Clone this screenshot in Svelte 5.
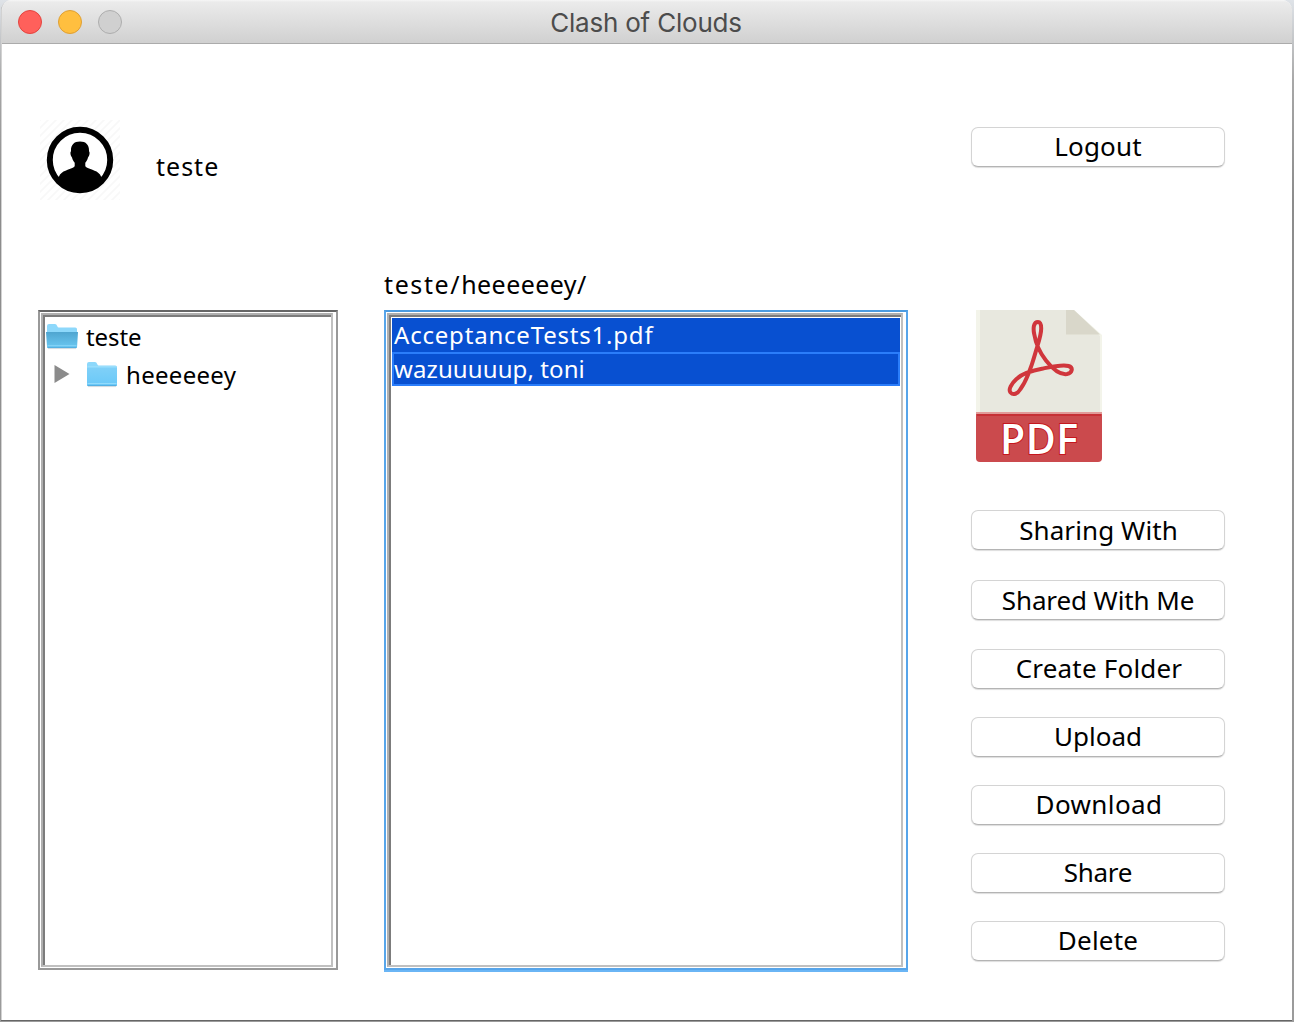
<script>
  const actions = [
    { label: 'Sharing With', kind: 'sharing' },
    { label: 'Shared With Me', kind: 'shared' },
    { label: 'Create Folder', kind: 'create' },
    { label: 'Upload', kind: 'upload' },
    { label: 'Download', kind: 'download' },
    { label: 'Share', kind: 'share' },
    { label: 'Delete', kind: 'delete' }
  ];
</script>

{#snippet folder(open)}
  <svg class="folder" width="32" height="28" viewBox="0 0 32 28">
    <defs>
      <linearGradient id="front" x1="0" y1="0" x2="0" y2="1">
        <stop offset="0" stop-color="#7fd0f8" />
        <stop offset="1" stop-color="#69c8f8" />
      </linearGradient>
      <linearGradient id="flap" x1="0" y1="0" x2="0" y2="1">
        <stop offset="0" stop-color="#4fa5d0" />
        <stop offset="1" stop-color="#6bc8f2" />
      </linearGradient>
    </defs>
    <path d="M2 25.6h28" stroke="#dedede" stroke-width="1" />
    <path d="M1 3q0-2 2-2h6q1.500 0 2.200 2t2 1.400h16q1.800 0 1.800 1.600v17.500q0 1.500-1.500 1.500h-27q-1.500 0-1.500-1.500z" fill="#8dd8fb" />
    {#if open}
      <path d="M0 9h32l-.9 14.500q0 1.500-1.500 1.500h-27q-1.500 0-1.600-1.500z" fill="url(#flap)" />
      <path d="M1.500 22.500h29" stroke="#86d4f7" stroke-width=".8" />
    {:else}
      <path d="M1 7h30v16.500q0 1.500-1.500 1.500h-27q-1.500 0-1.500-1.500z" fill="url(#front)" />
      <path d="M1.500 5.500h29M1.500 22.500h29" stroke="#9ce0fd" stroke-width=".8" />
    {/if}
    <path d="M1.500 24.600h29" stroke="#4ea9dc" stroke-width=".9" />
  </svg>
{/snippet}

<div class="desktop">
  <div class="window">
    <header class="titlebar">
      <div class="lights"><i class="close"></i><i class="minimize"></i><i class="zoom"></i></div>
      <h1>Clash of Clouds</h1>
    </header>

    <main>
      <section class="tree-column">
        <div class="user">
          <svg width="80" height="80" viewBox="0 0 80 80">
            <defs>
              <pattern id="hatch" width="8" height="8" patternUnits="userSpaceOnUse">
                <path d="M-2 2l4-4M0 8l8-8M6 10l4-4" stroke="#f8f8f8" stroke-width="1.800" />
              </pattern>
              <clipPath id="disc"><circle cx="40" cy="40" r="32" /></clipPath>
            </defs>
            <rect width="80" height="80" fill="url(#hatch)" />
            <circle cx="40" cy="40" r="30.200" fill="#fff" stroke="#000" stroke-width="6" />
            <path clip-path="url(#disc)" d="M40 21.500c6.300 0 9.300 3.700 9 9.700 1.200 1 .4 5-1 6.300-.6 2.600-1.600 3.900-2.700 5.200v3.500c3.200 3.600 11 3.200 14.700 8.300l2 4V76H18V58.500l2-4c4-5.100 11.500-4.700 14.700-8.300v-3.500c-1.100-1.300-2.100-2.600-2.700-5.200-1.400-1.300-2.200-5.300-1-6.300-.3-6 2.700-9.700 9-9.700z" />
          </svg>
          <span class="text username">teste</span>
        </div>
        <div class="panel tree">
          <div class="bevel">
            <div class="node root">{@render folder(true)}<span class="text t-root">teste</span></div>
            <div class="node child">
              <svg width="16" height="20" viewBox="0 0 16 20"><path d="M.5 1l15 9-15 9z" fill="#8b8b8b" /></svg>
              {@render folder(false)}<span class="text t-child">heeeeeey</span>
            </div>
          </div>
        </div>
      </section>

      <section class="file-column">
        <div class="path"><span class="text t-path"><span class="parent">teste/</span>heeeeeey/</span></div>
        <div class="panel files">
          <div class="bevel">
            <div class="row"><span class="text t-file">AcceptanceTests1.pdf</span></div>
            <div class="row focused"><span class="text t-note">wazuuuuup, toni</span></div>
          </div>
        </div>
      </section>

      <aside>
        <button class="logout"><span class="b-logout">Logout</span></button>
        <svg class="pdf" width="126" height="152" viewBox="0 0 126 152">
          <path d="M0 0h98l28 25v79H0z" fill="#f3f4ea" />
          <path d="M4 0h92l28 26v77H4z" fill="#e8e8df" />
          <path d="M90 0h8l26 24.500H90z" fill="#d9d7ca" />
          <path d="M0 102h126v46q0 4-4 4H4q-4 0-4-4z" fill="#cb4a4d" />
          <path d="M0 103h126" stroke="#e19a98" stroke-width="2" />
          <path d="M1 105h124" stroke="#c5282e" stroke-width="1.600" />
          <g fill="none" stroke="#d0363c" stroke-width="4" stroke-linejoin="round">
            <path d="M62 12c-4.500 0-5 6-3.800 12 1.300 8 5.800 19 11.800 26.500 7 9 14.500 14.500 21 13.500 5.500-1 6.500-6.500 1.500-8-6-1.800-16 .5-25.500 2.500C56 60.500 46 63.500 40.500 69c-5 4.500-8.500 10.500-6 13.500 2.700 3 7 1.500 10-3.500 7-9.500 11.500-24 15-36.500 2.500-9 5.700-17 5.700-24 0-4.500-.7-6.500-3.200-6.500z" />
          </g>
          <text class="pdf-label" x="24" y="143.500" textLength="78">PDF</text>
        </svg>
        <div class="actions">
          {#each actions as action}
            <button class={action.kind}><span class={`b-${action.kind}`}>{action.label}</span></button>
          {/each}
        </div>
      </aside>
    </main>
  </div>
</div>

<style>
  :global(body) { background: #a7a7a7; overflow: hidden; }
  * { box-sizing: border-box; }
  .desktop {
    width: 1294px; height: 1022px; padding: 0 2px 2px 1px;
    background: linear-gradient(#dfe3e8 0, #a8a8a8 80px, #8c8c8c 200px, #9b9b9b 100%);
    font-family: "Noto Sans", "Open Sans", sans-serif; color: #000;
  }
  .window {
    width: 1291px; height: 1020px; background: #fff; overflow: hidden;
    border-radius: 10px 10px 0 0; border-left: 1px solid #d2d2d2;
    box-shadow: 0 1px 0 #666;
  }
  .titlebar {
    height: 44px; display: grid; grid-template-columns: 250px 1fr 250px; align-items: center;
    background: linear-gradient(#f6f6f6 0, #ebebeb 2px, #d1d1d1 42px);
    border-bottom: 1px solid #ababab;
  }
  .lights { display: flex; gap: 16px; padding-left: 16px; }
  .lights i { width: 24px; height: 24px; border-radius: 50%; border: 1px solid; }
  .lights .close { background: #ff605b; border-color: #e3443f; }
  .lights .minimize { background: #ffbf3f; border-color: #de9f34; }
  .lights .zoom { background: #d0d0d0; border-color: #adadad; }
  h1 {
    margin: 0; text-align: center; font: 400 26px/41px Inter, sans-serif;
    color: #4c4c4c; letter-spacing: -.2px; padding: 2px 2px 0 0;
  }
  main { display: flex; padding-left: 36px; }
  .tree-column { width: 300px; margin-right: 46px; }
  .file-column { width: 524px; margin-right: 63px; }
  aside { width: 254px; padding-top: 83px; }
  .user { height: 266px; padding: 76px 0 0 2px; display: flex; }
  .path { height: 266px; padding-top: 224px; }
  .text { white-space: pre; font-size: 25px; line-height: 32px; display: block; }
  .username { margin: 30px 0 0 36px; letter-spacing: 1px; }
  .panel { height: 660px; border: 2px solid #999; border-top-color: #666; padding: 1px 3px 1px 1px; }
  .panel .text { font-size: 24px; }
  .bevel {
    height: 100%; border: 2px solid #c0c0c0; border-left-color: #b0b0b0; border-top-color: #b0b0b0;
    box-shadow: inset 2px 2px 0 #7c7c7c; padding: 2px;
  }
  .node { display: flex; height: 38px; }
  .root { padding: 4px 0 0 1px; }
  .child { padding: 4px 0 0 7px; }
  .child > svg:first-child { margin: 5px 16px 0 2px; }
  .folder { flex: none; margin-top: 2px; }
  .root .text { margin-left: 8px; }
  .child .text { margin: 0 0 0 8px; }
  .files {
    border-color: #57a5ea; border-top-color: #4c9be0; box-shadow: 0 2px 0 #6ab5f5;
  }
  .files .bevel { padding: 3px 1px 0 3px; }
  .row { height: 34px; background: #0850d1; color: #fff; padding: 1px 0 0 2px; }
  .focused { border: 2px solid #2b7dfa; padding: 0; }
  .focused .text { margin-top: -1px; }
  .t-root { letter-spacing: -.1px; }
  .t-child { letter-spacing: .3px; }
  .t-path { letter-spacing: .45px; }
  .parent { letter-spacing: 1.6px; }
  .t-file { letter-spacing: .8px; }
  .t-note { letter-spacing: .1px; }
  button {
    display: block; width: 254px; height: 40px; padding: 0 0 2px; border: 1px solid #d4d4d4;
    border-bottom-color: #b4b4b4; border-radius: 7px; background: #fff; color: #000;
    font: 26px/36px "Noto Sans", sans-serif; box-shadow: 0 1px 1px #ddd;
  }
  .b-logout { letter-spacing: .2px; }
  .b-sharing { letter-spacing: .1px; }
  .b-shared { letter-spacing: -.1px; }
  .b-create { letter-spacing: .2px; }
  .b-upload { letter-spacing: 0; }
  .b-download { letter-spacing: .4px; }
  .b-share { letter-spacing: -.3px; }
  .b-delete { letter-spacing: .2px; }
  .pdf { display: block; overflow: visible; margin: 143px 0 0 5px; }
  .actions { padding-top: 48px; display: flex; flex-direction: column; gap: 28px; }
  .sharing { margin-bottom: 2px; padding: 0 0 0 1px; }
  .shared { margin-bottom: 1px; padding: 0; }
  .create, .download { padding-left: 2px; }
  .pdf-label {
    font: 600 41px "Open Sans", sans-serif; fill: #fff;
    stroke: #c5171e; stroke-width: 2px; paint-order: stroke;
  }
</style>
